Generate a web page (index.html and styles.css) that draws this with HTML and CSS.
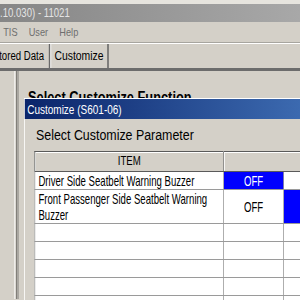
FILE: index.html
```html
<!DOCTYPE html>
<html lang="en">
<head>
    <meta charset="UTF-8">
    <meta name="viewport" content="width=device-width, initial-scale=1.0">
    <title>Customize</title>
    <link rel="stylesheet" href="styles.css">
</head>
<body>
    <div class="screen">
        <div class="titlebar">.10.030) - 11021</div>
        <div class="menubar">
            <span>TIS</span>
            <span>User</span>
            <span>Help</span>
        </div>
        <div class="tabs">
            <div class="tab first">Stored Data</div>
            <div class="tab active">Customize</div>
        </div>
        <div class="workspace">
            <div class="side"></div>
            <div class="main">
                <h2>Select Customize Function</h2>
            </div>
        </div>

        <!-- modal dialog on top of the main window -->
        <div class="dialog">
            <div class="dialog-title">Customize (S601-06)</div>
            <h3>Select Customize Parameter</h3>
            <table class="params">
                <colgroup>
                    <col class="c-item">
                    <col class="c-val">
                    <col class="c-val2">
                </colgroup>
                <thead>
                    <tr>
                        <th>ITEM</th>
                        <th colspan="2"></th>
                    </tr>
                </thead>
                <tbody>
                    <tr>
                        <td><div class="txt">Driver Side Seatbelt Warning Buzzer</div></td>
                        <td class="val sel"><span class="txt-c">OFF</span></td>
                        <td class="val"></td>
                    </tr>
                    <tr>
                        <td><div class="txt">Front Passenger Side Seatbelt Warning Buzzer</div></td>
                        <td class="val"><span class="txt-c">OFF</span></td>
                        <td class="val sel"></td>
                    </tr>
                    <tr class="blank"><td></td><td></td><td></td></tr>
                    <tr class="blank"><td></td><td></td><td></td></tr>
                    <tr class="blank"><td></td><td></td><td></td></tr>
                    <tr class="blank"><td></td><td></td><td></td></tr>
                    <tr class="blank"><td></td><td></td><td></td></tr>
                </tbody>
            </table>
        </div>
    </div>
</body>
</html>
```

FILE: styles.css
```css
html, body {
    margin: 0;
    width: 300px;
    height: 300px;
    overflow: hidden;
    background-color: #d4d0c8;
}
.screen {
    position: relative;
    width: 375px;
    height: 300px;
    overflow: hidden;
    transform: scaleX(0.8);
    transform-origin: 0 0;
    background-color: #d4d0c8;
    font-family: 'Liberation Sans', Arial, sans-serif;
    color: #000;
}
.titlebar {
    height: 18px;
    line-height: 18px;
    border-top: 4px solid #e6e4de;
    background: linear-gradient(to right, #868686, #a8a8a8);
    color: #e4e4e4;
    font-size: 12px;
    white-space: nowrap;
}
.menubar {
    display: flex;
    gap: 14px;
    height: 20px;
    line-height: 20px;
    padding-left: 4px;
    font-size: 11.5px;
    color: #6e6e6e;
    border-bottom: 1px solid #a7a59f;
}
.tabs {
    display: flex;
    height: 24px;
    border-top: 1px solid #fff;
}
.tab {
    line-height: 24px;
    padding: 0 5px 0 4px;
    border-left: 1px solid #fff;
    border-right: 2px solid #6a6a6a;
    font-size: 13px;
    white-space: nowrap;
}
.tab.first {
    margin-left: -14px;
    padding-right: 6px;
    font-size: 12px;
}
.workspace {
    display: flex;
    height: 228px;
    border-top: 3px solid #6c6c6c;
}
.side {
    width: 18px;
    border-right: 1px solid #fff;
}
.main {
    flex: 1;
    margin-left: 1px;
    border-left: 3px double #6c6a66;
}
.main h2 {
    margin: 18px 0 0 12px;
    font-size: 16px;
    line-height: 18px;
    font-weight: bold;
    white-space: nowrap;
}
.dialog {
    position: absolute;
    left: 30px;
    top: 98px;
    width: 420px;
    height: 260px;
    background-color: #d4d0c8;
    border-top: 1px solid #fff;
    border-left: 1px solid #fff;
}
.dialog-title {
    height: 20px;
    line-height: 22px;
    padding-left: 3px;
    background: linear-gradient(to right, #0a246a, #3c6ab0 345px, #a6caf0);
    color: #fff;
    font-size: 12.5px;
    white-space: nowrap;
}
.dialog h3 {
    margin: 7px 0 0 14px;
    font-size: 15.5px;
    line-height: 18px;
    font-weight: normal;
}
.params {
    margin: 7px 0 0 12px;
    width: 410px;
    table-layout: fixed;
    border-collapse: collapse;
    background-color: #fff;
    border: 1px solid #5a5a5a;
}
.c-item { width: 236px; }
.c-val { width: 75px; }
.c-val2 { width: 99px; }
.params th {
    height: 19px;
    padding: 0;
    line-height: 19px;
    background-color: #d4d0c8;
    box-shadow: inset 1px 1px 0 #fff;
    border-right: 1px solid #808080;
    border-bottom: 1px solid #5a5a5a;
    font-size: 12px;
    font-weight: normal;
}
.params td {
    padding: 1px 4px 0;
    line-height: 16px;
    border: 1px solid #9a9a9a;
    font-size: 15px;
    vertical-align: middle;
}
/* the cell font is a narrow one, so squeeze the text */
.params .txt {
    width: 284px;
    transform: scaleX(0.8);
    transform-origin: 0 0;
}
.params .txt-c {
    display: inline-block;
    transform: scaleX(0.8);
}
.params td.val {
    text-align: center;
}
.params td.sel {
    background-color: #0000ff;
    color: #fff;
}
.params .blank td {
    height: 17px;
    padding: 0;
}
```
